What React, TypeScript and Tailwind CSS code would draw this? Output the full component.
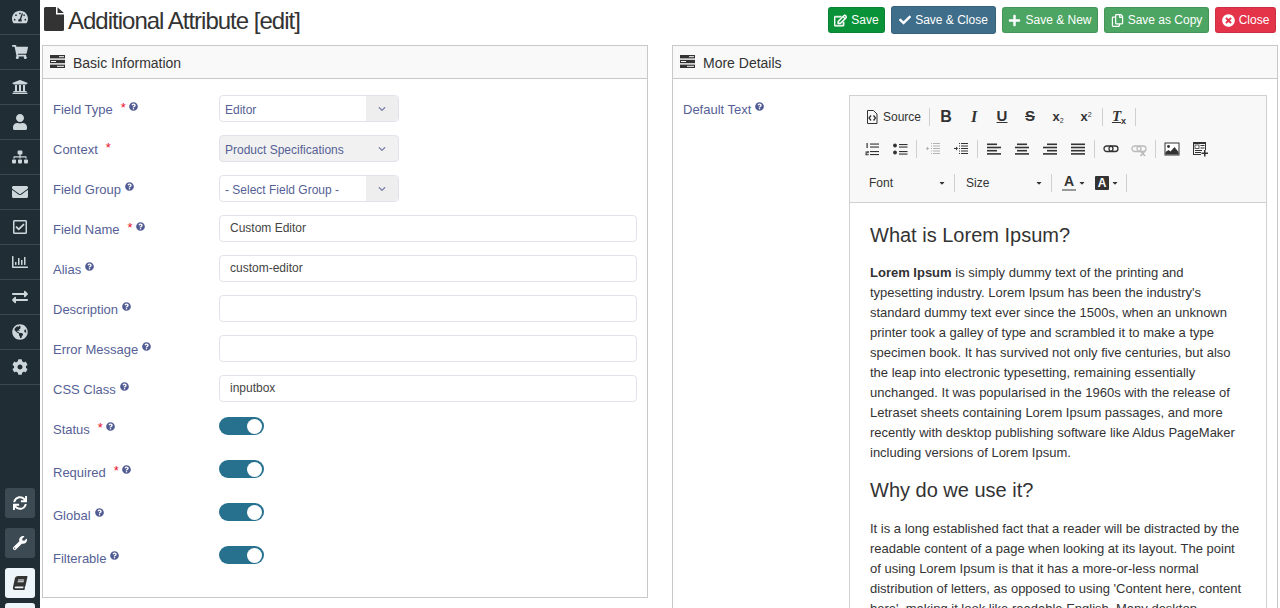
import React from "react";
import {
  FaTachometerAlt, FaShoppingCart, FaUniversity, FaUser, FaSitemap, FaEnvelope, FaRegCheckSquare,
  FaRegChartBar, FaExchangeAlt, FaGlobeAmericas, FaCog, FaSync, FaWrench, FaBook,
  FaRegEdit, FaCheck, FaPlus, FaRegCopy, FaTimesCircle, FaQuestionCircle, FaChevronDown, FaCaretDown,
} from "react-icons/fa";

const side = [FaTachometerAlt, FaShoppingCart, FaUniversity, FaUser, FaSitemap, FaEnvelope, FaRegCheckSquare, FaRegChartBar, FaExchangeAlt, FaGlobeAmericas, FaCog];

const PanelIcon = () => (
  <svg width="15" height="13" viewBox="0 0 15 13" className="shrink-0 -mt-[2px]">
    <rect x="0" y="0" width="15" height="3.4" fill="#333" />
    <rect x="0" y="4.8" width="15" height="3.4" fill="#333" />
    <rect x="0" y="9.6" width="15" height="3.4" fill="#333" />
    <rect x="9" y="1.2" width="5" height="1" fill="#f9f9f9" />
    <rect x="1" y="6" width="5" height="1" fill="#f9f9f9" />
    <rect x="7" y="10.8" width="7" height="1" fill="#f9f9f9" />
  </svg>
);

const Q = () => <FaQuestionCircle className="text-[#515b93] relative -top-[4px] ml-[4px] shrink-0" size={9} />;
const Star = () => <span className="text-[#e8112d] ml-[8px] -mr-[1px] text-[13px] relative -top-[2px]">*</span>;

function Label({ text, req, q = true }: { text: string; req?: boolean; q?: boolean }) {
  return (
    <div className="w-[166px] shrink-0 flex items-center h-[20px] text-[13px] text-[#565f96]">
      <span>{text}</span>
      {req && <Star />}
      {q && <Q />}
    </div>
  );
}

function Row({ children, label, req, q }: { children: React.ReactNode; label: string; req?: boolean; q?: boolean }) {
  return (
    <div className="flex items-start h-[27px] mb-[13px]">
      <div className="pt-[5px]"><Label text={label} req={req} q={q} /></div>
      {children}
    </div>
  );
}

function Select({ value, disabled }: { value: string; disabled?: boolean }) {
  return (
    <div className={`w-[180px] h-[27px] rounded-[4px] border border-[#e0e3ec] flex items-center text-[12px] text-[#565f96] overflow-hidden ${disabled ? "bg-[#f1f1f1]" : "bg-white"}`}>
      <span className="flex-1 pl-[5px] pt-[2px] whitespace-nowrap">{value}</span>
      <span className={`w-[32px] h-full flex items-center justify-center ${disabled ? "" : "bg-[#eeeeee]"}`}>
        <FaChevronDown size={8} className="text-[#7b82a8]" />
      </span>
    </div>
  );
}

const Input = ({ value = "" }: { value?: string }) => (
  <div className="flex-1 h-[27px] rounded-[4px] border border-[#e0e3ec] bg-white flex items-center pl-[10px] pb-[1px] text-[12px] text-[#444]">{value}</div>
);

function Toggle({ label, req }: { label: string; req?: boolean }) {
  return (
    <div className="flex items-start h-[18px] mb-[25px]">
      <div className="pt-[3px]"><Label text={label} req={req} /></div>
      <div className="w-[45px] h-[18px] rounded-full bg-[#27718f] flex items-center justify-end pr-[2px]">
        <div className="w-[15px] h-[15px] rounded-full bg-white" />
      </div>
    </div>
  );
}

function Btn({ w, bg, icon, text, tall }: { w: string; bg: string; icon: React.ReactNode; text: string; tall?: boolean }) {
  return (
    <div className={`${w} ${bg} ${tall ? "h-[28px]" : "h-[26px]"} rounded-[3px] border border-black/10 text-white text-[12px] flex items-center justify-center gap-[4px] whitespace-nowrap`}>
      {icon}
      <span>{text}</span>
    </div>
  );
}

const Sep = () => <div className="w-px h-[18px] bg-[#cfcfcf] mx-[2px] shrink-0" />;
const Tb = ({ children }: { children: React.ReactNode }) => (
  <div className="w-[28px] h-[33px] flex items-center justify-center shrink-0 text-[#333]">{children}</div>
);
const Lines = ({ rows, op = 1 }: { rows: [number, number][]; op?: number }) => (
  <svg width="16" height="16" viewBox="0 0 16 16" opacity={op}>
    {rows.map(([a, b], i) => <rect key={i} x={a} y={2.5 + i * 3.2} width={b} height="1.6" fill="#333" />)}
  </svg>
);

const Ico = {
  source: (
    <svg width="16" height="16" viewBox="0 0 16 16" fill="none" stroke="#333">
      <path d="M3.5 1.5h6l3.5 3.5v9.5h-9.5z" />
      <path d="M7 6.5 5 9l2 2.5M9.5 6.5 11.5 9l-2 2.5" strokeWidth="1.3" />
    </svg>
  ),
  num: (
    <svg width="16" height="16" viewBox="0 0 16 16" fill="#333">
      <rect x="6" y="2.5" width="9" height="1.1" /><rect x="6" y="5.5" width="9" height="1.1" />
      <rect x="6" y="10" width="9" height="1.1" /><rect x="6" y="13" width="9" height="1.1" />
      <rect x="2.5" y="2" width="1.2" height="5" /><path d="M1.5 10h3.2v2.2H2.6v1h2.2v1H1.5v-2.9h2.1v-.8H1.5z" />
    </svg>
  ),
  bul: (
    <svg width="16" height="16" viewBox="0 0 16 16" fill="#333">
      <circle cx="3" cy="4.5" r="1.9" /><circle cx="3" cy="11.5" r="1.9" />
      <rect x="7" y="3" width="8.5" height="1.1" /><rect x="7" y="5.5" width="8.5" height="1.1" />
      <rect x="7" y="10" width="8.5" height="1.1" /><rect x="7" y="12.5" width="8.5" height="1.1" />
    </svg>
  ),
  indent: (op: number, flip: boolean) => (
    <svg width="16" height="16" viewBox="0 0 16 16" opacity={op} fill="#333">
      <rect x="8" y="2" width="7" height="1" /><rect x="8" y="4.5" width="7" height="1" /><rect x="8" y="7" width="7" height="1" />
      <rect x="8" y="9.5" width="7" height="1" /><rect x="8" y="12" width="7" height="1" />
      <path d="M6 2h1v1H6zM6 4.5h1v1H6zM6 7h1v1H6zM6 9.5h1v1H6zM6 12h1v1H6z" />
      <rect x="1" y="7" width="3" height="1" />
      <path d={flip ? "M1 7.5 3 5.5v4z" : "M5 7.5 3 5.5v4z"} />
    </svg>
  ),
  link: (op: number) => (
    <svg width="16" height="16" viewBox="0 0 16 16" fill="none" stroke="#333" strokeWidth="1.3" opacity={op}>
      <rect x="1" y="5" width="9" height="5.5" rx="2.75" />
      <rect x="6" y="5" width="9" height="5.5" rx="2.75" />
      {op < 1 && <path d="m9.5 10 4.5 5M14 10l-4.5 5" strokeWidth="1.6" />}
    </svg>
  ),
  image: (
    <svg width="16" height="16" viewBox="0 0 16 16">
      <rect x="1" y="2" width="14" height="12" fill="#fff" stroke="#333" />
      <circle cx="4.5" cy="5.5" r="1.4" fill="#333" />
      <path d="M1.5 13.5V11l3-2 2 1.5L10.5 6l4 5v2.5z" fill="#333" />
    </svg>
  ),
  table: (
    <svg width="16" height="16" viewBox="0 0 16 16" fill="#333">
      <path d="M1 1h13v8h-1V3H2v10h7v1H1z" />
      <rect x="3" y="4" width="4" height="3.5" fill="none" stroke="#333" strokeWidth="0.8" />
      <rect x="8.5" y="4" width="4" height="1" /><rect x="8.5" y="6.5" width="4" height="1" /><rect x="3" y="9" width="7" height="1" />
      <rect x="3" y="11" width="6" height="1" />
      <path d="M12 9h1.5v2.5H16V13h-2.5v2.5H12V13H9.5v-1.5H12z" />
    </svg>
  ),
};
const Caret = () => <FaCaretDown size={8} className="text-[#333]" />;

const p1 = [
  "is simply dummy text of the printing and",
  "typesetting industry. Lorem Ipsum has been the industry's",
  "standard dummy text ever since the 1500s, when an unknown",
  "printer took a galley of type and scrambled it to make a type",
  "specimen book. It has survived not only five centuries, but also",
  "the leap into electronic typesetting, remaining essentially",
  "unchanged. It was popularised in the 1960s with the release of",
  "Letraset sheets containing Lorem Ipsum passages, and more",
  "recently with desktop publishing software like Aldus PageMaker",
  "including versions of Lorem Ipsum.",
];
const p2 = [
  "It is a long established fact that a reader will be distracted by the",
  "readable content of a page when looking at its layout. The point",
  "of using Lorem Ipsum is that it has a more-or-less normal",
  "distribution of letters, as opposed to using 'Content here, content",
  "here', making it look like readable English. Many desktop",
];

export default function App() {
  return (
    <div className="h-[608px] overflow-hidden flex bg-white font-['Liberation_Sans',sans-serif]">
      <aside className="w-[40px] shrink-0 bg-[#212d35] flex flex-col h-[640px]">
        {side.map((I, i) => (
          <div key={i} className="h-[35px] shrink-0 border-b border-[#3a4852] flex items-center justify-center text-[#cdd6db]">
            <I size={16} />
          </div>
        ))}
        <div className="mt-[103px] flex flex-col items-center gap-[10px]">
          <div className="w-[30px] h-[30px] rounded-[3px] bg-[#3b4a53] text-white flex items-center justify-center"><FaSync size={14} /></div>
          <div className="w-[30px] h-[30px] rounded-[3px] bg-[#3b4a53] text-white flex items-center justify-center"><FaWrench size={14} /></div>
          <div className="w-[30px] h-[30px] rounded-[3px] bg-[#eef6fc] text-[#333] flex items-center justify-center"><FaBook size={14} className="-skew-x-12" /></div>
          <div className="w-[30px] h-[30px] -mt-[5px] rounded-[3px] bg-[#eef6fc]" />
        </div>
      </aside>

      <main className="flex-1 min-w-0 px-[2px]">
        <header className="h-[45px] flex items-start justify-between">
          <div className="flex items-center mt-[7px] ml-[2px] h-[24px]">
            <svg width="20" height="24" viewBox="0 0 20 24" className="shrink-0" fill="#333">
              <path d="M1.5 0H12v7.5h8V22.5a1.5 1.5 0 0 1-1.5 1.5h-17A1.5 1.5 0 0 1 0 22.5v-21A1.5 1.5 0 0 1 1.5 0z" />
              <path d="M13.5 0.2 19.8 6H13.5z" />
            </svg>
            <h1 className="ml-[4px] mt-[3px] text-[24px] text-[#333] tracking-[-1px] leading-[28px]">Additional Attribute [edit]</h1>
          </div>
          <div className="flex items-center gap-[6px] mr-[2px] mt-[6px] h-[28px]">
            <Btn w="w-[57px]" bg="bg-[#0a9239]" icon={<FaRegEdit size={13} stroke="currentColor" strokeWidth={25} />} text="Save" />
            <Btn w="w-[105px]" bg="bg-[#3f6e8a]" icon={<FaCheck size={12} />} text="Save & Close" tall />
            <Btn w="w-[96px]" bg="bg-[#4ca562]" icon={<FaPlus size={13} />} text="Save & New" />
            <Btn w="w-[105px]" bg="bg-[#4ca562]" icon={<FaRegCopy size={13} />} text="Save as Copy" />
            <Btn w="w-[61px]" bg="bg-[#e4344a]" icon={<FaTimesCircle size={13} />} text="Close" />
          </div>
        </header>

        <div className="grid grid-cols-2 gap-[24px] items-start">
          <section className="border border-[#c9c9c9] h-[553px]">
            <div className="h-[33px] bg-[#f9f9f9] border-b border-[#c9c9c9] flex items-center pl-[7px] gap-[8px] text-[14px] text-[#333]">
              <PanelIcon /><span className="pt-[2px]">Basic Information</span>
            </div>
            <div className="pt-[16px] pl-[10px] pr-[10px]">
              <Row label="Field Type" req><Select value="Editor" /></Row>
              <Row label="Context" req q={false}><Select value="Product Specifications" disabled /></Row>
              <Row label="Field Group"><Select value="- Select Field Group -" /></Row>
              <Row label="Field Name" req><Input value="Custom Editor" /></Row>
              <Row label="Alias"><Input value="custom-editor" /></Row>
              <Row label="Description"><Input /></Row>
              <Row label="Error Message"><Input /></Row>
              <Row label="CSS Class"><Input value="inputbox" /></Row>
              <div className="h-[2px]" />
              <Toggle label="Status" req />
              <Toggle label="Required" req />
              <Toggle label="Global" />
              <Toggle label="Filterable" />
            </div>
          </section>

          <section className="border border-[#c9c9c9] h-[700px]">
            <div className="h-[33px] bg-[#f9f9f9] border-b border-[#c9c9c9] flex items-center pl-[7px] gap-[8px] text-[14px] text-[#333]">
              <PanelIcon /><span className="pt-[2px]">More Details</span>
            </div>
            <div className="pt-[16px] pl-[10px] pr-[10px] flex items-start">
              <div className="pt-[5px]"><Label text="Default Text" /></div>
              <div className="flex-1 border border-[#d1d1d1]">
                <div className="bg-[#f8f8f8] border-b border-[#d1d1d1] pt-[4px] pb-[3px] pl-[8px]">
                  <div className="flex items-center h-[33px]">
                    <div className="w-[69px] h-[33px] flex items-center pl-[6px] gap-[3px] text-[12px] text-[#333] shrink-0">{Ico.source}<span>Source</span></div>
                    <Sep />
                    <Tb><span className="font-bold text-[16px]">B</span></Tb>
                    <Tb><span className="italic font-bold font-['Liberation_Serif',serif] text-[16px]">I</span></Tb>
                    <Tb><span className="underline font-bold text-[15px]">U</span></Tb>
                    <Tb><span className="line-through font-bold text-[15px]">S</span></Tb>
                    <Tb><span className="font-bold text-[13px]">x<sub className="text-[7px] font-normal">2</sub></span></Tb>
                    <Tb><span className="font-bold text-[13px]">x<sup className="text-[7px] font-normal">2</sup></span></Tb>
                    <Sep />
                    <Tb><span className="font-bold italic font-['Liberation_Serif',serif] text-[15px] underline">T<sub className="text-[9px] not-italic font-['Liberation_Sans',sans-serif]">x</sub></span></Tb>
                    <Sep />
                  </div>
                  <div className="flex items-center h-[33px] -mt-[1px] mb-[1px]">
                    <Tb>{Ico.num}</Tb>
                    <Tb>{Ico.bul}</Tb>
                    <Sep />
                    <Tb>{Ico.indent(0.35, true)}</Tb>
                    <Tb>{Ico.indent(1, false)}</Tb>
                    <Sep />
                    <Tb><Lines rows={[[1, 10], [1, 14], [1, 10], [1, 14]]} /></Tb>
                    <Tb><Lines rows={[[3, 10], [1, 14], [3, 10], [1, 14]]} /></Tb>
                    <Tb><Lines rows={[[5, 10], [1, 14], [5, 10], [1, 14]]} /></Tb>
                    <Tb><Lines rows={[[1, 14], [1, 14], [1, 14], [1, 14]]} /></Tb>
                    <Sep />
                    <Tb>{Ico.link(1)}</Tb>
                    <Tb>{Ico.link(0.3)}</Tb>
                    <Sep />
                    <Tb>{Ico.image}</Tb>
                    <Tb>{Ico.table}</Tb>
                  </div>
                  <div className="flex items-center h-[33px] text-[12px] text-[#333]">
                    <div className="w-[94px] flex items-center justify-between pl-[11px] pr-[6px] shrink-0"><span>Font</span><Caret /></div>
                    <Sep />
                    <div className="w-[92px] flex items-center justify-between pl-[9px] pr-[6px] shrink-0"><span>Size</span><Caret /></div>
                    <Sep />
                    <div className="w-[37px] flex items-center pl-[8px] gap-[2px] shrink-0">
                      <span className="font-bold text-[14px] leading-[15px] border-b-2 border-[#999] w-[14px] text-center">A</span><Caret />
                    </div>
                    <div className="w-[33px] flex items-center pl-[4px] gap-[2px] shrink-0">
                      <span className="font-bold text-[12px] leading-[14px] bg-[#333] text-white w-[14px] text-center rounded-[1px]">A</span><Caret />
                    </div>
                    <Sep />
                  </div>
                </div>
                <div className="px-[20px] text-[#333] bg-white whitespace-nowrap">
                  <h2 className="text-[20px] leading-[28px] mt-[18px] mb-[14px]">What is Lorem Ipsum?</h2>
                  <div className="text-[13px] leading-[20px]">
                    {p1.map((l, i) => (
                      <div key={i}>{i === 0 && <b>Lorem Ipsum </b>}{l}</div>
                    ))}
                  </div>
                  <h2 className="text-[20px] leading-[28px] mt-[13px] mb-[15px]">Why do we use it?</h2>
                  <div className="text-[13px] leading-[20px]">
                    {p2.map((l, i) => <div key={i}>{l}</div>)}
                  </div>
                </div>
              </div>
            </div>
          </section>
        </div>
      </main>
    </div>
  );
}
